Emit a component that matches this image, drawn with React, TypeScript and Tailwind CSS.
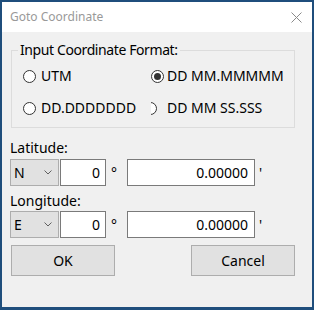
import { useState } from 'react'

function Radio({ checked }: { checked: boolean }) {
  return (
    <span className="w-[13px] h-[13px] shrink-0 rounded-full border border-[#333333] bg-white flex items-center justify-center">
      {checked && <span className="w-[7px] h-[7px] rounded-full bg-[#333333]" />}
    </span>
  )
}

function Combo({ value }: { value: string }) {
  return (
    <div className="w-[49px] h-[27px] bg-[#e1e1e1] border border-[#adadad] flex items-center pl-[3px] pr-[6px] justify-between">
      <span>{value}</span>
      <svg width="8" height="5" viewBox="0 0 8 5" className="text-[#606060]">
        <path d="M0.5 0.5 L4 4 L7.5 0.5" fill="none" stroke="currentColor" strokeWidth="1" />
      </svg>
    </div>
  )
}

function CoordRow({ dir }: { dir: string }) {
  return (
    <div className="flex items-center h-[27px]">
      <Combo value={dir} />
      <div className="ml-[1px] w-[46px] h-[27px] bg-white border border-[#7a7a7a] flex items-center justify-end pr-[5px]">0</div>
      <span className="w-[21px] pl-[5px]">°</span>
      <div className="w-[128px] h-[27px] bg-white border border-[#7a7a7a] flex items-center justify-end pr-[6px]">0.00000</div>
      <span className="pl-[4px]">'</span>
    </div>
  )
}

export default function App() {
  const [fmt] = useState('ddmm')

  return (
    <div className="w-[314px] h-[310px] bg-[#1f4e7c] pt-[2px] px-[2px] pb-[3px] font-['Noto_Sans',sans-serif] text-[14px] leading-[20px] text-black whitespace-nowrap">
      <div className="h-full bg-[#f0f0f0] flex flex-col">
        <div className="h-[30px] bg-white flex items-center justify-between pl-[8px] pr-[10px]">
          <span className="text-[12px] text-[#999999]">Goto Coordinate</span>
          <svg width="11" height="11" viewBox="0 0 11 11" className="text-[#8a8a8a]">
            <path d="M0.5 0.5 L10.5 10.5 M10.5 0.5 L0.5 10.5" stroke="currentColor" strokeWidth="1" />
          </svg>
        </div>

        <div className="flex flex-col pl-[8px]">
          <fieldset className="mt-[8px] ml-[1px] w-[284px] border border-[#dcdcdc] pb-[9px]">
            <legend className="ml-[6px] px-[2px] tracking-[-0.4px]">Input Coordinate Format:</legend>
            <div className="grid grid-cols-[128px_1fr] gap-y-[12px] pl-[11px] pt-[6px]">
              <label className="flex items-center gap-[5px] h-[20px]">
                <Radio checked={fmt === 'utm'} />
                <span>UTM</span>
              </label>
              <label className="flex items-center gap-[3px] h-[20px]">
                <Radio checked={fmt === 'ddmm'} />
                <span>DD MM.MMMMM</span>
              </label>
              <label className="flex items-center gap-[5px] h-[20px]">
                <Radio checked={fmt === 'dd'} />
                <span>DD.DDDDDDD</span>
              </label>
              <label className="flex items-center gap-[10px] h-[20px]">
                <span className="w-[6px] h-[13px] overflow-hidden flex justify-end">
                  <Radio checked={fmt === 'ddmmss'} />
                </span>
                <span>DD MM SS.SSS</span>
              </label>
            </div>
          </fieldset>

          <div className="mt-[10px]">Latitude:</div>
          <div className="mt-[1px]">
            <CoordRow dir="N" />
          </div>
          <div className="mt-[5px]">Longitude:</div>
          <CoordRow dir="E" />

          <div className="mt-[7px] flex justify-between pl-[1px] pr-[17px]">
            <button className="w-[104px] h-[31px] bg-[#e1e1e1] border border-[#adadad]">OK</button>
            <button className="w-[104px] h-[31px] bg-[#e1e1e1] border border-[#adadad]">Cancel</button>
          </div>
        </div>
      </div>
    </div>
  )
}
